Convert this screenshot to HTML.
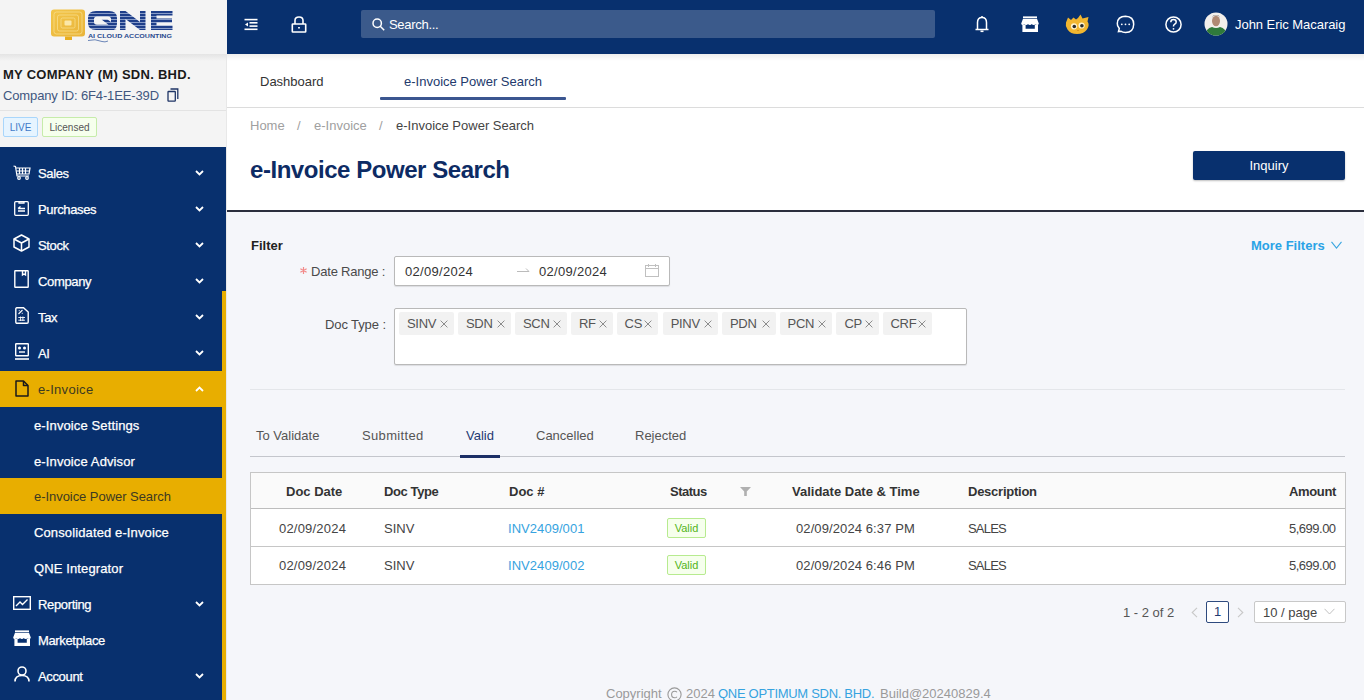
<!DOCTYPE html>
<html><head><meta charset="utf-8">
<style>
*{box-sizing:border-box;margin:0;padding:0}
html,body{width:1364px;height:700px;overflow:hidden;background:#f5f6fa;font-family:"Liberation Sans",sans-serif;font-size:13px;color:#333}
.abs{position:absolute;white-space:nowrap}
#side{position:absolute;left:0;top:0;width:227px;height:700px;background:#f4f4f4;border-right:1px solid #e8e8e8}
#logo{position:absolute;left:0;top:0;width:227px;height:54px;background:#f4f4f4}
#sideshadow{position:absolute;left:0;top:54px;width:226px;height:7px;background:linear-gradient(#e4e4e4,#f4f4f4)}
#menu{position:absolute;left:0;top:147px;width:226px;height:553px;background:#08306e}
#scroll{position:absolute;left:222px;top:291px;width:4px;height:409px;background:#e8ae00}
.mi{position:absolute;left:0;width:222px;height:36px;color:#fff;font-size:13px}
.mi .t{position:absolute;left:38px;top:11px;-webkit-text-stroke:0.25px currentColor}
.mi svg.ic{position:absolute;left:13px;top:10px}
.mi .chev{position:absolute;left:195px;top:15px}
.mi .t{letter-spacing:-0.35px}
.sub .t{left:34px;letter-spacing:0.12px}
.sel .t{-webkit-text-stroke:0;letter-spacing:0.3px}
.sub.sel .t{letter-spacing:-0.05px}
.sel{background:#e8ae00;color:#3d3a22}
#hdr{position:absolute;left:227px;top:0;width:1137px;height:54px;background:#08306e}
#tabs{position:absolute;left:227px;top:54px;width:1137px;height:54px;background:#fff;border-bottom:1px solid #dcdcdc}
#tophead{position:absolute;left:227px;top:108px;width:1137px;height:104px;background:#fff;border-bottom:2px solid #2b2e3d}
.tag{position:absolute;top:312px;height:23px;background:#f2f2f2;border-radius:2px;font-size:13px;color:#555}
.tag span{position:absolute;left:8px;top:4px;letter-spacing:-0.3px}
.tag svg{position:absolute;right:6px;top:8px}
.th{position:absolute;top:484px;font-weight:bold;font-size:13px;color:#333;white-space:nowrap}
.td{position:absolute;font-size:13px;color:#444;white-space:nowrap}
</style></head><body>
<div id="side">
  <div id="logo">
  <svg class="abs" style="left:50px;top:8px" width="125" height="36" viewBox="0 0 125 36">
    <defs><linearGradient id="yg" x1="0" y1="0" x2="1" y2="1"><stop offset="0" stop-color="#f3c64a"/><stop offset="1" stop-color="#e9b43a"/></linearGradient>
    <clipPath id="qclip"><rect x="0" y="0" width="125" height="22.5"/></clipPath><pattern id="stripe" width="4" height="3" patternUnits="userSpaceOnUse" y="3"><rect width="4" height="2.1" fill="#1f3f8a"/><rect y="2.1" width="4" height="0.9" fill="#7d93c4"/></pattern></defs>
    <rect x="1" y="1.5" width="34" height="27" rx="3" fill="url(#yg)"/>
    <rect x="4" y="4" width="28" height="22" rx="2.5" fill="none" stroke="#f8dd8a" stroke-width="0.8"/>
    <rect x="7.5" y="7" width="21" height="16" rx="2" fill="none" stroke="#f8dd8a" stroke-width="0.8"/>
    <rect x="11" y="10" width="14" height="10" rx="1.5" fill="none" stroke="#f8dd8a" stroke-width="0.8"/>
    <rect x="14.5" y="12.5" width="7" height="5" rx="1" fill="#fbe7a8"/>
    <rect x="15" y="28.5" width="7" height="3.5" fill="#e8ae20"/>
    <g fill="url(#stripe)"><path fill-rule="evenodd" d="M46 3 H59 Q67 3 67 10 V15 Q67 20 64 21.5 L67 22 H46 Q38 22 38 15 V10 Q38 3 46 3 Z M47 8.5 Q44 8.5 44 11 V14 Q44 16.8 47 16.8 H58.5 L51.5 11.5 H57.5 L61 14 V11 Q61 8.5 58 8.5 Z"/>
<path d="M70 3 H75.5 L90 14 V3 H95.5 V22 H90 L75.5 11 V22 H70 Z"/>
<path d="M101 3 H122.5 V7.5 H106.5 V10.5 H122 V14.5 H106.5 V17.5 H122.5 V22 H101 Z"/></g>
    <text x="38" y="30" font-family="Liberation Sans" font-weight="bold" font-size="5.2" textLength="84" lengthAdjust="spacingAndGlyphs" fill="#2a4a8e">AI CLOUD ACCOUNTING</text>
    <path d="M38 32.5 Q45 30.5 52 33.5 Q55 34.5 58 33" fill="none" stroke="#5a78b0" stroke-width="0.9"/>
  </svg>
</div>
  <div id="sideshadow"></div>
  <div class="abs" style="left:3px;top:67px;font-weight:bold;font-size:13px;color:#1a1a1a;letter-spacing:0.27px">MY COMPANY (M) SDN. BHD.</div>
  <div class="abs" style="left:3px;top:88px;font-size:13px;color:#41577f;letter-spacing:-0.13px">Company ID: 6F4-1EE-39D</div>
  <svg class="abs" style="left:167px;top:88px" width="12" height="14" viewBox="0 0 12 14" fill="none" stroke="#1f3566" stroke-width="1.3"><path d="M3.5 1 H10.8 V11"/><rect x="1" y="3.5" width="7.3" height="9.6" rx="0.6"/></svg>
  <div class="abs" style="left:0;top:110px;width:226px;height:1px;background:#e3e3e3"></div>
  <div class="abs" style="left:3px;top:117px;width:35px;height:20px;border:1px solid #a9d6fb;background:#e6f4ff;border-radius:2px;color:#3f7ac8;font-size:10px;text-align:center;line-height:19px">LIVE</div>
  <div class="abs" style="left:42px;top:117px;width:55px;height:20px;border:1px solid #c6ecaa;background:#f6ffed;border-radius:2px;color:#555;font-size:10px;text-align:center;line-height:19px">Licensed</div>

  <div id="menu">
    <div class="mi" style="top:8px"><svg class="ic" style="left:13px;top:10px" width="18" height="15" viewBox="0 0 18 15" fill="none" stroke="#fff" stroke-width="1.2"><path d="M0.5 1 L2.5 1.5 L4 11 L16 11"/><path d="M3 3 H17 L16 9 H4"/><path d="M6.5 3 V9 M9.5 3 V9 M12.5 3 V9 M3.4 6 H16.5"/><circle cx="6" cy="13" r="1.3"/><circle cx="14" cy="13" r="1.3"/></svg><span class="t">Sales</span><svg class="chev" width="9" height="6" viewBox="0 0 9 6"><path d="M1 1 L4.5 4.5 L8 1" fill="none" stroke="#fff" stroke-width="1.8"/></svg></div>
    <div class="mi" style="top:44px"><svg class="ic" style="left:14px;top:10px" width="15" height="15" viewBox="0 0 15 15" fill="none" stroke="#fff" stroke-width="1.3"><rect x="0.7" y="0.7" width="13.6" height="13.6" rx="1"/><path d="M5 0.7 V2 H10 V0.7"/><path d="M4 7.5 H11 M4 10 H11 M4 7.5 L6.5 5.5"/></svg><span class="t">Purchases</span><svg class="chev" width="9" height="6" viewBox="0 0 9 6"><path d="M1 1 L4.5 4.5 L8 1" fill="none" stroke="#fff" stroke-width="1.8"/></svg></div>
    <div class="mi" style="top:80px"><svg class="ic" style="left:13px;top:7px" width="17" height="18" viewBox="0 0 17 18" fill="none" stroke="#fff" stroke-width="1.5" stroke-linejoin="round"><path d="M8.5 1 L16 5 V13 L8.5 17 L1 13 V5 Z"/><path d="M1 5 L8.5 9 L16 5 M8.5 9 V17"/></svg><span class="t">Stock</span><svg class="chev" width="9" height="6" viewBox="0 0 9 6"><path d="M1 1 L4.5 4.5 L8 1" fill="none" stroke="#fff" stroke-width="1.8"/></svg></div>
    <div class="mi" style="top:116px"><svg class="ic" style="left:14px;top:7px" width="15" height="18" viewBox="0 0 15 18" fill="none" stroke="#fff" stroke-width="1.4"><rect x="0.8" y="0.8" width="13.4" height="16.4" rx="0.5"/><path d="M8.5 0.8 V5 L10 4 L11.5 5 V0.8"/></svg><span class="t">Company</span><svg class="chev" width="9" height="6" viewBox="0 0 9 6"><path d="M1 1 L4.5 4.5 L8 1" fill="none" stroke="#fff" stroke-width="1.8"/></svg></div>
    <div class="mi" style="top:152px"><svg class="ic" style="left:15px;top:8px" width="14" height="17" viewBox="0 0 14 17" fill="none" stroke="#fff" stroke-width="1.4"><path d="M1.8 0.8 H8.5 L13.2 5 V15 Q13.2 16.2 12 16.2 H2 Q0.8 16.2 0.8 15 V2 Q0.8 0.8 1.8 0.8 Z"/><path d="M3.5 7 L7.5 3 M3.8 3.6 h0.8 M6.8 6.4 h0.8" stroke-width="1.1"/><path d="M3.3 10.5 H10 M3.3 13.2 H10 M5.6 9.5 V14 M7.9 9.5 V14" stroke-width="0.9"/></svg><span class="t">Tax</span><svg class="chev" width="9" height="6" viewBox="0 0 9 6"><path d="M1 1 L4.5 4.5 L8 1" fill="none" stroke="#fff" stroke-width="1.8"/></svg></div>
    <div class="mi" style="top:188px"><svg class="ic" style="left:15px;top:8px" width="14" height="17" viewBox="0 0 14 17" fill="none" stroke="#fff" stroke-width="1.4"><rect x="0.7" y="0.7" width="12.6" height="12" rx="0.5"/><path d="M0 16 H14" stroke-width="1.6"/><circle cx="4.5" cy="5" r="0.8" fill="#fff"/><circle cx="9.5" cy="5" r="0.8" fill="#fff"/><path d="M4 9 H10"/></svg><span class="t">AI</span><svg class="chev" width="9" height="6" viewBox="0 0 9 6"><path d="M1 1 L4.5 4.5 L8 1" fill="none" stroke="#fff" stroke-width="1.8"/></svg></div>
    <div class="mi sel" style="top:224px;width:226px"><svg class="ic" style="left:15px;top:9px" width="14" height="17" viewBox="0 0 14 17" fill="none" stroke="#1a1a1a" stroke-width="1.5" stroke-linejoin="round"><path d="M1 1 H8.5 L13 5.5 V16 H1 Z"/><path d="M8.5 1 V5.5 H13"/></svg><span class="t" style="top:11px">e-Invoice</span><svg class="chev" width="9" height="6" viewBox="0 0 9 6"><path d="M1 5 L4.5 1.5 L8 5" fill="none" stroke="#fff" stroke-width="1.8"/></svg></div>
    <div class="mi sub" style="top:260px"><span class="t">e-Invoice Settings</span></div>
    <div class="mi sub" style="top:296px"><span class="t">e-Invoice Advisor</span></div>
    <div class="mi sub sel" style="top:331px;width:226px"><span class="t">e-Invoice Power Search</span></div>
    <div class="mi sub" style="top:367px"><span class="t">Consolidated e-Invoice</span></div>
    <div class="mi sub" style="top:403px"><span class="t">QNE Integrator</span></div>
    <div class="mi" style="top:439px"><svg class="ic" style="left:13px;top:10px" width="18" height="14" viewBox="0 0 18 14" fill="none" stroke="#fff" stroke-width="1.4"><rect x="0.7" y="0.7" width="16.6" height="12.6"/><path d="M3 10 L7 6 L9.5 8.5 L14.5 3.5"/></svg><span class="t">Reporting</span><svg class="chev" width="9" height="6" viewBox="0 0 9 6"><path d="M1 1 L4.5 4.5 L8 1" fill="none" stroke="#fff" stroke-width="1.8"/></svg></div>
    <div class="mi" style="top:475px"><svg class="ic" style="left:13px;top:8px" width="18" height="16" viewBox="0 0 18 16"><rect x="2" y="0.4" width="14" height="1.7" fill="#fff"/><path fill="#fff" d="M2 2.8 H16 L17.8 7.6 Q17.8 8.9 16.4 8.9 Q15.1 8.9 14.6 7.9 Q14 8.9 12.7 8.9 Q11.4 8.9 10.8 7.9 Q10.2 8.9 8.9 8.9 Q7.6 8.9 7 7.9 Q6.4 8.9 5.1 8.9 Q3.8 8.9 3.2 7.9 Q2.6 8.9 1.4 8.9 Q0.2 8.9 0.2 7.6 Z"/><path fill="#fff" fill-rule="evenodd" d="M1.4 8.4 H4.6 V12.8 H13.8 V8.4 H17 V16 H1.4 Z"/></svg><span class="t">Marketplace</span></div>
    <div class="mi" style="top:511px"><svg class="ic" style="left:14px;top:8px" width="16" height="16" viewBox="0 0 16 16" fill="none" stroke="#fff" stroke-width="1.6"><circle cx="8" cy="5" r="4"/><path d="M1 15.5 Q1 9.5 8 9.5 Q15 9.5 15 15.5"/></svg><span class="t">Account</span><svg class="chev" width="9" height="6" viewBox="0 0 9 6"><path d="M1 1 L4.5 4.5 L8 1" fill="none" stroke="#fff" stroke-width="1.8"/></svg></div>
  </div>
  <div id="scroll"></div>
</div>
<div id="hdr">
  <svg class="abs" style="left:17px;top:18px" width="14" height="13" viewBox="0 0 14 13" fill="#fff"><rect x="0.5" y="0.8" width="13" height="1.6"/><rect x="5.5" y="4" width="8" height="1.6"/><rect x="5.5" y="7.3" width="8" height="1.6"/><rect x="0.5" y="10.5" width="13" height="1.6"/><path d="M1 6.5 L4 4.5 V8.5 Z"/></svg>
  <svg class="abs" style="left:64px;top:16px" width="16" height="17" viewBox="0 0 16 17" fill="none" stroke="#fff" stroke-width="1.6"><path d="M4 8 V4.5 Q4 1 8 1 Q12 1 12 4.5 V8"/><rect x="1.3" y="8" width="13.4" height="8" rx="0.5"/><path d="M8 11 V12.5" stroke-width="1.8"/></svg>
  <div class="abs" style="left:134px;top:10px;width:574px;height:28px;background:#3b5a8b;border-radius:2px"></div>
  <svg class="abs" style="left:145px;top:18px" width="13" height="13" viewBox="0 0 13 13" fill="none" stroke="#fff" stroke-width="1.5"><circle cx="5.2" cy="5.2" r="4.2"/><path d="M8.2 8.2 L12.2 12.2"/></svg>
  <div class="abs" style="left:162px;top:17px;color:#fff;font-size:13px;letter-spacing:-0.3px">Search...</div>
  <svg class="abs" style="left:748px;top:15px" width="14" height="18" viewBox="0 0 14 18" fill="none" stroke="#fff" stroke-width="1.5"><path d="M7 1 V2.2"/><path d="M2.5 14 V7.5 Q2.5 2.5 7 2.5 Q11.5 2.5 11.5 7.5 V14"/><path d="M0.5 14.5 H13.5"/><path d="M5.5 16.3 H8.5" stroke-width="1.6"/></svg>
  <svg class="abs" style="left:794px;top:16px" width="18" height="16" viewBox="0 0 18 16"><rect x="2" y="0.4" width="14" height="1.7" fill="#fff"/><path fill="#fff" d="M2 2.8 H16 L17.8 7.6 Q17.8 8.9 16.4 8.9 Q15.1 8.9 14.6 7.9 Q14 8.9 12.7 8.9 Q11.4 8.9 10.8 7.9 Q10.2 8.9 8.9 8.9 Q7.6 8.9 7 7.9 Q6.4 8.9 5.1 8.9 Q3.8 8.9 3.2 7.9 Q2.6 8.9 1.4 8.9 Q0.2 8.9 0.2 7.6 Z"/><path fill="#fff" fill-rule="evenodd" d="M1.4 8.4 H4.6 V12.8 H13.8 V8.4 H17 V16 H1.4 Z"/></svg>
  <svg class="abs" style="left:838px;top:14px" width="25" height="20" viewBox="0 0 25 20"><path d="M1 8.5 L3 3.5 L6 6 L8.5 3.5 L11 5.5 L13 4 L15.5 0.5 L17.5 4.5 L23.5 3 L22.5 7.5 Q25 11 22 15.5 Q18.5 20 12 20 Q5.5 20 2.5 15.5 Q0 12 1 8.5Z" fill="#f2b630"/><circle cx="9" cy="12.3" r="3.1" fill="#fff4cf"/><circle cx="16.6" cy="11.5" r="3.1" fill="#fff4cf"/><circle cx="9.3" cy="12.5" r="1.8" fill="#2b2b2b"/><circle cx="16.9" cy="11.7" r="1.8" fill="#2b2b2b"/><path d="M12 16 L13 17 L14 16" fill="none" stroke="#d08a20" stroke-width="0.8"/></svg>
  <svg class="abs" style="left:889px;top:15px" width="19" height="19" viewBox="0 0 19 19" fill="none" stroke="#fff" stroke-width="1.5"><path d="M2.5 16.5 L3.3 13.5 Q1 10.5 1.3 8.5 Q1.5 1.2 9.5 1.2 Q17.7 1.5 17.7 9.3 Q17.5 17.5 9.5 17.5 Q6.5 17.5 5 16.2 Z"/><circle cx="5.8" cy="9.3" r="0.9" fill="#fff" stroke="none"/><circle cx="9.5" cy="9.3" r="0.9" fill="#fff" stroke="none"/><circle cx="13.2" cy="9.3" r="0.9" fill="#fff" stroke="none"/></svg>
  <svg class="abs" style="left:937px;top:15px" width="19" height="19" viewBox="0 0 19 19" fill="none" stroke="#fff" stroke-width="1.5"><circle cx="9.5" cy="9.5" r="7.6"/><path d="M6.8 7.3 Q6.8 4.6 9.5 4.6 Q12.2 4.6 12.2 7 Q12.2 8.5 10.5 9.3 Q9.5 9.8 9.5 11 V11.6"/><circle cx="9.5" cy="13.8" r="0.9" fill="#fff" stroke="none"/></svg>
  <svg class="abs" style="left:977px;top:12px" width="24" height="24" viewBox="0 0 24 24"><defs><clipPath id="av"><circle cx="12" cy="12" r="11.5"/></clipPath></defs><g clip-path="url(#av)"><rect width="24" height="24" fill="#f2efec"/><ellipse cx="12" cy="9" rx="4" ry="5.2" fill="#b08a74"/><path d="M8 5 Q12 1.5 16 5 Q15 3 12 3 Q9 3 8 5Z" fill="#5a4a40"/><path d="M1 24 Q2 16 8 15 Q12 17 16 15 Q22 16 23 24Z" fill="#2f7a3b"/></g></svg>
  <div class="abs" style="left:1008px;top:17px;color:#fff;font-size:13px;letter-spacing:-0.05px">John Eric Macaraig</div>
</div>
<div id="tabs">
  <div class="abs" style="left:33px;top:20px;font-size:13px;color:#333">Dashboard</div>
  <div class="abs" style="left:177px;top:20px;font-size:13px;color:#233a6c">e-Invoice Power Search</div>
  <div class="abs" style="left:153px;top:43px;width:186px;height:2.5px;background:#3b5690;border-radius:1px"></div>
</div>
<div class="abs" style="left:227px;top:54px;width:1137px;height:7px;background:linear-gradient(rgba(0,0,0,0.07),rgba(0,0,0,0))"></div>
<div id="tophead">
  <div class="abs" style="left:23px;top:10px;font-size:13px;color:#a0a0a0">Home</div>
  <div class="abs" style="left:70px;top:10px;font-size:13px;color:#a0a0a0">/</div>
  <div class="abs" style="left:87px;top:10px;font-size:13px;color:#a0a0a0">e-Invoice</div>
  <div class="abs" style="left:152px;top:10px;font-size:13px;color:#a0a0a0">/</div>
  <div class="abs" style="left:169px;top:10px;font-size:13px;color:#444">e-Invoice Power Search</div>
  <div class="abs" style="left:23px;top:48px;font-size:24px;font-weight:bold;color:#0d2b64;letter-spacing:-0.45px">e-Invoice Power Search</div>
  <div class="abs" style="left:966px;top:43px;width:152px;height:29px;background:#08306e;border-radius:2px;box-shadow:0 1px 2px rgba(0,0,0,0.25);color:#fff;font-size:13px;text-align:center;line-height:29px">Inquiry</div>
</div>

<div class="abs" style="left:251px;top:238px;font-weight:bold;font-size:13px;color:#222">Filter</div>
<div class="abs" style="left:1251px;top:238px;font-weight:bold;font-size:13px;color:#2aa3e6">More Filters</div>
<svg class="abs" style="left:1331px;top:241px" width="11" height="8" viewBox="0 0 11 8"><path d="M0.5 0.8 L5.5 7 L10.5 0.8" fill="none" stroke="#3aa6e0" stroke-width="1.1"/></svg>
<svg class="abs" style="left:300px;top:267px" width="7" height="7" viewBox="0 0 7 7" fill="none" stroke="#f28a8a" stroke-width="1.2"><path d="M3.5 0 V7 M0.4 1.7 L6.6 5.3 M0.4 5.3 L6.6 1.7"/></svg>
<div class="abs" style="left:311px;top:264px;font-size:13px;color:#4a4a4a;letter-spacing:-0.2px">Date Range :</div>
<div class="abs" style="left:394px;top:256px;width:276px;height:30px;background:#fff;border:1px solid #b9b9b9;border-radius:2px;box-shadow:0 1px 1px rgba(0,0,0,0.1)"></div>
<div class="abs" style="left:405px;top:264px;font-size:13px;color:#333;letter-spacing:0.3px">02/09/2024</div>
<svg class="abs" style="left:517px;top:267px" width="13" height="6" viewBox="0 0 13 6"><path d="M0 4.5 H12 L9 1.5" fill="none" stroke="#bbb" stroke-width="1"/></svg>
<div class="abs" style="left:539px;top:264px;font-size:13px;color:#333;letter-spacing:0.3px">02/09/2024</div>
<svg class="abs" style="left:645px;top:264px" width="14" height="13" viewBox="0 0 14 13" fill="none" stroke="#c0c0c0" stroke-width="1"><rect x="0.5" y="1.5" width="13" height="11"/><path d="M0.5 4.5 H13.5 M3.5 0 V3 M10.5 0 V3"/></svg>
<div class="abs" style="left:325px;top:317px;font-size:13px;color:#4a4a4a;letter-spacing:-0.1px">Doc Type :</div>
<div class="abs" style="left:394px;top:308px;width:573px;height:57px;background:#fff;border:1px solid #b9b9b9;border-radius:2px;box-shadow:0 1px 1px rgba(0,0,0,0.1)"></div>
<div class="tag" style="left:399.0px;width:55.0px"><span>SINV</span><svg width="8" height="8" viewBox="0 0 8 8"><path d="M0.6 0.6 L7.4 7.4 M7.4 0.6 L0.6 7.4" stroke="#8c8c8c" stroke-width="1"/></svg></div>
<div class="tag" style="left:458.0px;width:53.0px"><span>SDN</span><svg width="8" height="8" viewBox="0 0 8 8"><path d="M0.6 0.6 L7.4 7.4 M7.4 0.6 L0.6 7.4" stroke="#8c8c8c" stroke-width="1"/></svg></div>
<div class="tag" style="left:515.0px;width:52.0px"><span>SCN</span><svg width="8" height="8" viewBox="0 0 8 8"><path d="M0.6 0.6 L7.4 7.4 M7.4 0.6 L0.6 7.4" stroke="#8c8c8c" stroke-width="1"/></svg></div>
<div class="tag" style="left:571.0px;width:41.5px"><span>RF</span><svg width="8" height="8" viewBox="0 0 8 8"><path d="M0.6 0.6 L7.4 7.4 M7.4 0.6 L0.6 7.4" stroke="#8c8c8c" stroke-width="1"/></svg></div>
<div class="tag" style="left:616.6px;width:41.7px"><span>CS</span><svg width="8" height="8" viewBox="0 0 8 8"><path d="M0.6 0.6 L7.4 7.4 M7.4 0.6 L0.6 7.4" stroke="#8c8c8c" stroke-width="1"/></svg></div>
<div class="tag" style="left:662.7px;width:55.5px"><span>PINV</span><svg width="8" height="8" viewBox="0 0 8 8"><path d="M0.6 0.6 L7.4 7.4 M7.4 0.6 L0.6 7.4" stroke="#8c8c8c" stroke-width="1"/></svg></div>
<div class="tag" style="left:722.0px;width:53.7px"><span>PDN</span><svg width="8" height="8" viewBox="0 0 8 8"><path d="M0.6 0.6 L7.4 7.4 M7.4 0.6 L0.6 7.4" stroke="#8c8c8c" stroke-width="1"/></svg></div>
<div class="tag" style="left:779.6px;width:52.8px"><span>PCN</span><svg width="8" height="8" viewBox="0 0 8 8"><path d="M0.6 0.6 L7.4 7.4 M7.4 0.6 L0.6 7.4" stroke="#8c8c8c" stroke-width="1"/></svg></div>
<div class="tag" style="left:836.4px;width:42.2px"><span>CP</span><svg width="8" height="8" viewBox="0 0 8 8"><path d="M0.6 0.6 L7.4 7.4 M7.4 0.6 L0.6 7.4" stroke="#8c8c8c" stroke-width="1"/></svg></div>
<div class="tag" style="left:882.5px;width:49.5px"><span>CRF</span><svg width="8" height="8" viewBox="0 0 8 8"><path d="M0.6 0.6 L7.4 7.4 M7.4 0.6 L0.6 7.4" stroke="#8c8c8c" stroke-width="1"/></svg></div>

<div class="abs" style="left:250px;top:389px;width:1095px;height:1px;background:#e4e6ea"></div>

<div class="abs" style="left:256px;top:428px;font-size:13px;color:#555">To Validate</div>
<div class="abs" style="left:362px;top:428px;font-size:13px;color:#555;letter-spacing:0.35px">Submitted</div>
<div class="abs" style="left:466px;top:428px;font-size:13px;color:#1f3a72">Valid</div>
<div class="abs" style="left:536px;top:428px;font-size:13px;color:#555">Cancelled</div>
<div class="abs" style="left:635px;top:428px;font-size:13px;color:#555">Rejected</div>
<div class="abs" style="left:250px;top:456px;width:1095px;height:1px;background:#c4c6cc"></div>
<div class="abs" style="left:460px;top:454.5px;width:40px;height:3px;background:#1c2f66"></div>
<div class="abs" style="left:250px;top:472px;width:1096px;height:113px;background:#fff;border:1px solid #c6c6c6"></div>
<div class="abs" style="left:251px;top:473px;width:1094px;height:36px;background:#fafafa;border-bottom:1px solid #bdbdbd"></div>
<div class="abs" style="left:251px;top:546px;width:1094px;height:1px;background:#c6c6c6"></div>
<div class="th" style="left:286px">Doc Date</div>
<div class="th" style="left:384px;letter-spacing:-0.4px">Doc Type</div>
<div class="th" style="left:509px">Doc #</div>
<div class="th" style="left:670px;letter-spacing:-0.5px">Status</div>
<svg class="abs" style="left:740px;top:487px" width="11" height="9" viewBox="0 0 11 9" fill="#b0b0b0"><path d="M0 0 H11 L6.8 4.5 V9 H4.2 V4.5 Z"/></svg>
<div class="th" style="left:792px">Validate Date &amp; Time</div>
<div class="th" style="left:968px;letter-spacing:-0.25px">Description</div>
<div class="th" style="left:1289px;letter-spacing:-0.35px">Amount</div>
<div class="td" style="left:279px;top:521px;letter-spacing:0.2px">02/09/2024</div>
<div class="td" style="left:384px;top:521px">SINV</div>
<div class="td" style="left:508px;top:521px;color:#36a3e0;letter-spacing:0.05px">INV2409/001</div>
<div class="abs" style="left:667px;top:518px;width:39px;height:20px;background:#f6ffed;border:1px solid #b7eb8f;border-radius:2px;color:#52b41a;font-size:11px;text-align:center;line-height:18px">Valid</div>
<div class="td" style="left:796px;top:521px;letter-spacing:0.1px">02/09/2024 6:37 PM</div>
<div class="td" style="left:968px;top:521px;letter-spacing:-0.8px">SALES</div>
<div class="td" style="left:1289px;top:521px;letter-spacing:-0.5px">5,699.00</div>
<div class="td" style="left:279px;top:558px;letter-spacing:0.2px">02/09/2024</div>
<div class="td" style="left:384px;top:558px">SINV</div>
<div class="td" style="left:508px;top:558px;color:#36a3e0;letter-spacing:0.05px">INV2409/002</div>
<div class="abs" style="left:667px;top:555px;width:39px;height:20px;background:#f6ffed;border:1px solid #b7eb8f;border-radius:2px;color:#52b41a;font-size:11px;text-align:center;line-height:18px">Valid</div>
<div class="td" style="left:796px;top:558px;letter-spacing:0.1px">02/09/2024 6:46 PM</div>
<div class="td" style="left:968px;top:558px;letter-spacing:-0.8px">SALES</div>
<div class="td" style="left:1289px;top:558px;letter-spacing:-0.5px">5,699.00</div>

<div class="abs" style="left:1123px;top:605px;font-size:13px;color:#555">1 - 2 of 2</div>
<svg class="abs" style="left:1191px;top:607px" width="7" height="11" viewBox="0 0 7 11"><path d="M6 0.8 L1.2 5.5 L6 10.2" fill="none" stroke="#c8c8c8" stroke-width="1.1"/></svg>
<div class="abs" style="left:1206px;top:601px;width:23px;height:22px;border:1px solid #2e4a7e;border-radius:2px;background:#fff;color:#1f3a72;font-size:13px;text-align:center;line-height:20px">1</div>
<svg class="abs" style="left:1237px;top:607px" width="7" height="11" viewBox="0 0 7 11"><path d="M1 0.8 L5.8 5.5 L1 10.2" fill="none" stroke="#c8c8c8" stroke-width="1.1"/></svg>
<div class="abs" style="left:1254px;top:601px;width:92px;height:22px;border:1px solid #c8c8c8;border-radius:2px;background:#fff"></div>
<div class="abs" style="left:1263px;top:605px;font-size:13px;color:#444">10 / page</div>
<svg class="abs" style="left:1324px;top:608px" width="11" height="7" viewBox="0 0 11 7"><path d="M0.5 0.8 L5.5 6 L10.5 0.8" fill="none" stroke="#c0c0c0" stroke-width="1"/></svg>
<div class="abs" style="left:606px;top:686px;font-size:13px;color:#9a9a9a">Copyright</div>
<svg class="abs" style="left:667px;top:687px" width="15" height="15" viewBox="0 0 15 15" fill="none" stroke="#9a9a9a" stroke-width="1.1"><circle cx="7.5" cy="7.5" r="6.6"/><path d="M10 5.3 Q9.2 4.2 7.7 4.2 Q4.6 4.2 4.6 7.5 Q4.6 10.8 7.7 10.8 Q9.2 10.8 10 9.7"/></svg>
<div class="abs" style="left:686px;top:686px;font-size:13px;color:#9a9a9a">2024</div>
<div class="abs" style="left:718px;top:686px;font-size:13px;color:#36a3e0;letter-spacing:-0.3px">QNE OPTIMUM SDN. BHD.</div>
<div class="abs" style="left:880px;top:686px;font-size:13px;color:#9a9a9a">Build@20240829.4</div>
</body></html>
